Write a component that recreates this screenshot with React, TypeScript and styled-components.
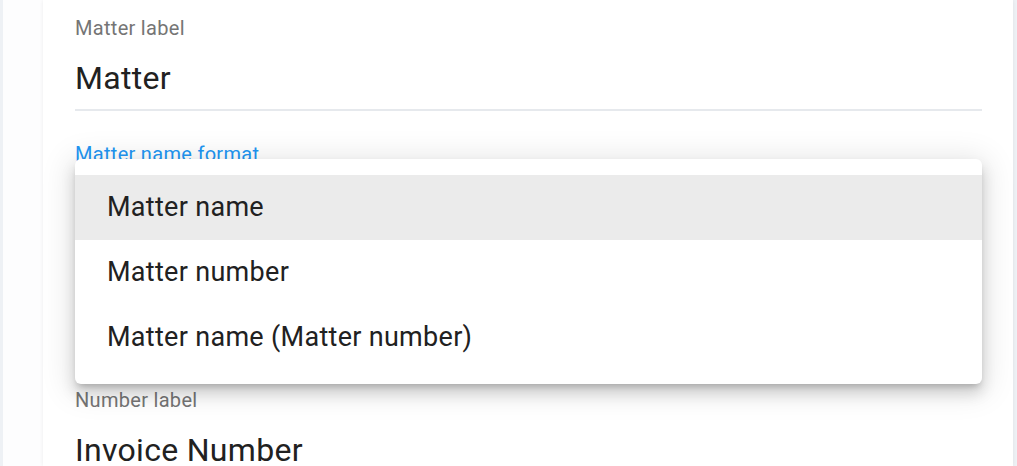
import React, { useState } from 'react';
import styled, { createGlobalStyle, css } from 'styled-components';

const GlobalStyle = createGlobalStyle`
  html, body {
    margin: 0;
    padding: 0;
    height: 100%;
    overflow: hidden;
    background: #eef1f5;
    font-family: Roboto, "Noto Sans", "Liberation Sans", sans-serif;
  }
  #root {
    height: 100%;
  }
`;

const options = [
  { id: 'name', label: 'Matter name' },
  { id: 'number', label: 'Matter number' },
  { id: 'both', label: 'Matter name (Matter number)' },
];

export default function App() {
  const [selected, setSelected] = useState('name');
  const [open, setOpen] = useState(true);
  const current = options.find((o) => o.id === selected);

  return (
    <>
      <GlobalStyle />
      <Page>
        <Gutter>
          <Card>
            <Field>
              <Label>Matter label</Label>
              <Value>Matter</Value>
            </Field>

            <Field $extraSpace>
              <Label $focused={open}>Matter name format</Label>
              {/* value sits under the open menu, so keep its space but hide it */}
              <Value $hidden={open} onClick={() => setOpen(!open)}>
                {current?.label}
              </Value>
              {open && (
                <Menu>
                  {options.map((option) => (
                    <MenuItem
                      key={option.id}
                      $selected={option.id === selected}
                      onClick={() => {
                        setSelected(option.id);
                        setOpen(false);
                      }}
                    >
                      {option.label}
                    </MenuItem>
                  ))}
                </Menu>
              )}
            </Field>

            <Field>
              <Label>Number label</Label>
              <Value>Invoice Number</Value>
            </Field>
          </Card>
        </Gutter>
      </Page>
    </>
  );
}

const Page = styled.div`
  display: flex;
  height: 100%;
  padding-left: 3px;
  padding-right: 4px;
  box-sizing: border-box;
`;

const Gutter = styled.div`
  flex: 1;
  display: flex;
  background: #fdfdfe;
  padding-left: 40px;
`;

const Card = styled.div`
  flex: 1;
  display: flex;
  flex-direction: column;
  gap: 31px;
  background: #ffffff;
  padding: 16px 31px 0 32px;
  box-shadow: 0 0 4px rgba(0, 0, 0, 0.07);
`;

const Field = styled.div<{ $extraSpace?: boolean }>`
  position: relative;
  display: flex;
  flex-direction: column;
  gap: 18px;
  ${({ $extraSpace }) =>
    $extraSpace &&
    css`
      margin-bottom: 120px;
    `}
`;

const Label = styled.label<{ $focused?: boolean }>`
  font-size: 20px;
  line-height: 24px;
  letter-spacing: 0.3px;
  color: ${({ $focused }) => ($focused ? '#2196f3' : '#757575')};
`;

const Value = styled.div<{ $hidden?: boolean }>`
  font-size: 32px;
  line-height: 40px;
  letter-spacing: 0.3px;
  color: #212121;
  padding-bottom: 11px;
  border-bottom: 2px solid #e6e9ed;
  cursor: text;
  white-space: nowrap;
  ${({ $hidden }) =>
    $hidden &&
    css`
      color: transparent;
    `}
`;

const Menu = styled.ul`
  position: absolute;
  top: 17px;
  left: 0;
  right: 0;
  margin: 0;
  padding: 16px 0 14px;
  list-style: none;
  background: #ffffff;
  border-radius: 6px;
  z-index: 10;
  box-shadow: 0 5px 6px -3px rgba(0, 0, 0, 0.2), 0 9px 14px 1px rgba(0, 0, 0, 0.13),
    0 4px 30px 6px rgba(0, 0, 0, 0.1);
`;

const MenuItem = styled.li<{ $selected: boolean }>`
  height: 65px;
  line-height: 65px;
  padding-left: 32px;
  font-size: 27px;
  letter-spacing: 0.3px;
  color: #212121;
  cursor: pointer;
  background: ${({ $selected }) => ($selected ? '#ebebeb' : 'transparent')};

  &:hover {
    background: ${({ $selected }) => ($selected ? '#ebebeb' : '#f5f5f5')};
  }
`;
